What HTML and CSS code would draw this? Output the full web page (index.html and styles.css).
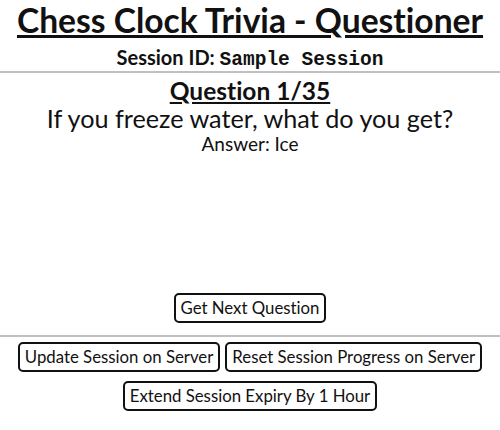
FILE: index.html
```html
<!DOCTYPE html>
<html lang="en">
<head>
    <meta charset="UTF-8">
    <meta name="viewport" content="width=device-width, initial-scale=1.0">
    <title>Chess Clock Trivia - Questioner</title>
    <link rel="stylesheet" href="styles.css">
</head>
<body>
    <header class="top">
        <h1>Chess Clock Trivia - Questioner</h1>
        <div class="session">Session ID: <code>Sample Session</code></div>
    </header>
    <main class="question-area">
        <h2>Question 1/35</h2>
        <div class="question">If you freeze water, what do you get?</div>
        <div class="answer">Answer: Ice</div>
    </main>
    <div class="next-row">
        <button>Get Next Question</button>
    </div>
    <footer class="controls">
        <button>Update Session on Server</button>
        <button>Reset Session Progress on Server</button>
        <button>Extend Session Expiry By 1 Hour</button>
    </footer>
</body>
</html>
```

FILE: styles.css
```css
body {
    font-family: Lato, "Noto Sans", sans-serif;
    font-variant-ligatures: none;
    margin: 0;
    color: #111;
    text-align: center;
}
.top {
    border-bottom: 2px solid #c0c0c0;
}
h1 {
    font-size: 33.6px;
    margin: 0;
    text-decoration: underline;
    line-height: 40px;
}
.session {
    font-size: 20px;
    font-weight: bold;
    line-height: 28px;
    padding-top: 3px;
}
.session code {
    font-family: "Liberation Mono", monospace;
    font-size: 19.5px;
    line-height: 1;
}
.question-area {
    height: 220px;
}
h2 {
    font-size: 24.5px;
    margin: 0;
    padding-top: 3px;
    text-decoration: underline;
    line-height: 29px;
}
.question {
    font-size: 25.2px;
    line-height: 26px;
}
.answer {
    font-size: 19px;
    line-height: 25px;
}
button {
    font-family: Lato, "Noto Sans", sans-serif;
    font-variant-ligatures: none;
    font-size: 16.8px;
    line-height: 20px;
    background: #fff;
    color: #111;
    border: 2px solid #111;
    border-radius: 5px;
    padding: 3px 5px;
    cursor: pointer;
}
.next-row {
    padding-bottom: 12px;
    border-bottom: 2px solid #c0c0c0;
}
.controls {
    padding: 5px 10px;
    display: flex;
    flex-wrap: wrap;
    justify-content: center;
    gap: 9px 5px;
}
```
